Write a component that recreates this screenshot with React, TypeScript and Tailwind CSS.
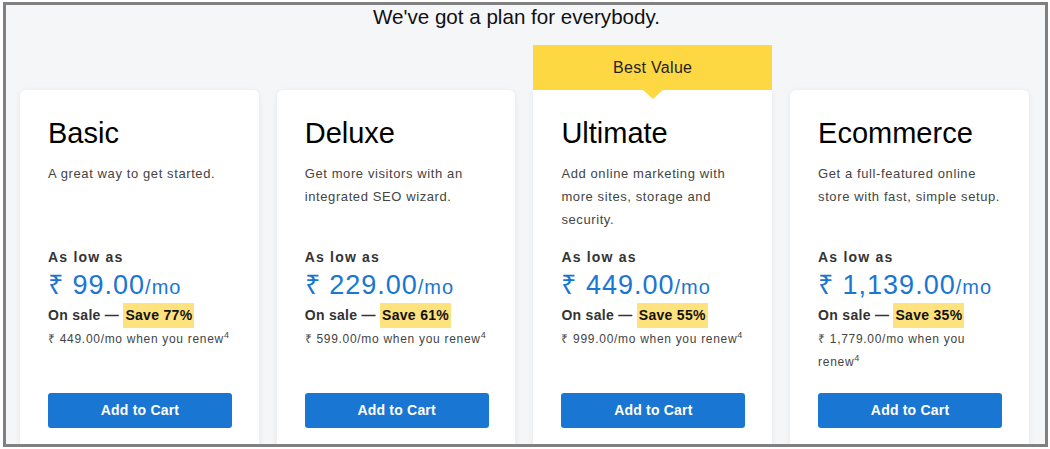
import React from "react";

type Plan = {
  name: string;
  desc: string;
  price: string;
  save: string;
  renew: string;
  best?: boolean;
};

const plans: Plan[] = [
  { name: "Basic", desc: "A great way to get started.", price: "₹ 99.00", save: "Save 77%", renew: "₹ 449.00/mo when you renew" },
  { name: "Deluxe", desc: "Get more visitors with an integrated SEO wizard.", price: "₹ 229.00", save: "Save 61%", renew: "₹ 599.00/mo when you renew" },
  { name: "Ultimate", desc: "Add online marketing with more sites, storage and security.", price: "₹ 449.00", save: "Save 55%", renew: "₹ 999.00/mo when you renew", best: true },
  { name: "Ecommerce", desc: "Get a full-featured online store with fast, simple setup.", price: "₹ 1,139.00", save: "Save 35%", renew: "₹ 1,779.00/mo when you renew" },
];

function Card({ p }: { p: Plan }) {
  return (
    <div className="flex w-[238.7px] shrink-0 flex-col">
      {p.best ? (
        <div className="relative flex h-[45px] items-center justify-center bg-[#fed843] text-[16px] tracking-[0.3px] text-[#222]">
          Best Value
          <div className="absolute left-1/2 top-[45px] z-10 h-0 w-0 -translate-x-1/2 border-x-[10px] border-t-[9px] border-x-transparent border-t-[#fed843]" />
        </div>
      ) : (
        <div className="h-[45px]" />
      )}
      <div
        className={`h-[400px] bg-white pl-[28px] pr-[26.7px] pt-[27px] shadow-[0_1px_6px_rgba(0,0,0,0.07)] ${
          p.best ? "" : "rounded-t-[6px]"
        }`}
      >
        <div className="text-[29px] leading-[32px] text-[#000]">{p.name}</div>
        <div className="mt-[13px] h-[69px] text-[13px] leading-[23px] tracking-[0.6px] text-[#444]">{p.desc}</div>
        <div className="mt-[17px] text-[14px] font-bold leading-[18px] tracking-[1.2px] text-[#333]">As low as</div>
        <div className="mt-[3px] flex items-baseline leading-[32px] tracking-[1px] text-[#1976d2]">
          <span className="text-[27px]">{p.price}</span>
          <span className="text-[20px]">/mo</span>
        </div>
        <div className="text-[14px] font-bold leading-[25px] tracking-[0.3px] text-[#333]">
          On sale —{" "}
          <span className="inline-block bg-[#fee27d] px-[2px] text-[#111]">{p.save}</span>
        </div>
        <div className="h-[46px] text-[12px] leading-[23px] tracking-[0.7px] text-[#444]">
          {p.renew}
          <span className="relative -top-[5px] align-baseline text-[9px] leading-none tracking-normal">4</span>
        </div>
        <button className="mt-[19px] flex h-[35px] w-full items-center justify-center rounded-[3px] bg-[#1976d2] text-[14px] font-bold tracking-[0.2px] text-white">
          Add to Cart
        </button>
      </div>
    </div>
  );
}

export default function App() {
  return (
    <div className="h-[449px] w-[1050px] bg-white pl-[3px] pt-[2px]" style={{ fontFamily: '"Liberation Sans", Arial, sans-serif' }}>
      <div className="h-[445px] w-[1045px] overflow-hidden border-[3px] border-[#808080] bg-[#f5f6f8]">
        <div className="pr-[18px] text-center text-[20.6px] leading-[24px] text-[#111]">We've got a plan for everybody.</div>
        <div className="mt-[16px] flex gap-[18px] pl-[14px]">
          {plans.map((p) => (
            <Card key={p.name} p={p} />
          ))}
        </div>
      </div>
    </div>
  );
}
